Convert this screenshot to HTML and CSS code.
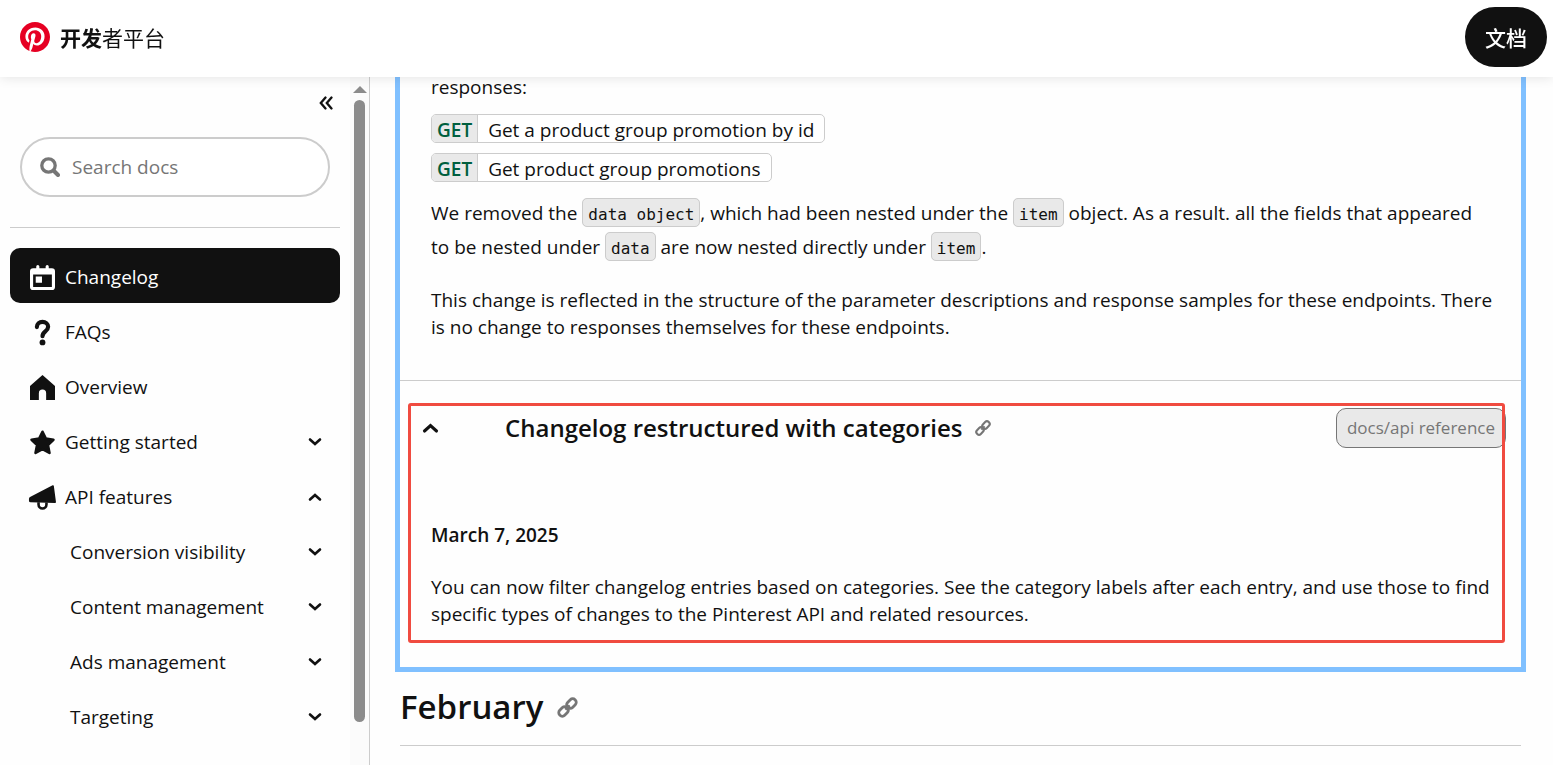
FILE: index.html
```html
<!DOCTYPE html>
<html lang="en">
<head>
<meta charset="utf-8">
<title>开发者平台</title>
<link rel="stylesheet" href="styles.css">
</head>
<body>
<svg class="sprite" aria-hidden="true">
  <symbol id="chevron" viewBox="0 0 14 10"><path d="M2 2.5 7 7 12 2.5" fill="none" stroke="currentColor" stroke-width="2.6" stroke-linecap="round" stroke-linejoin="miter"/></symbol>
  <symbol id="link" viewBox="0 0 24 24"><g fill="none" stroke="currentColor" stroke-width="3.2"><rect x="10.500" y="3.500" width="12" height="8" rx="3.800" transform="rotate(-45 16.500 7.500)"/><rect x="1.500" y="12.500" width="12" height="8" rx="3.800" transform="rotate(-45 7.500 16.500)"/><path d="m9.500 14.500 5-5" stroke-width="3"/></g></symbol>
</svg>
<header class="topbar">
  <a class="brand" href="#">
    <svg class="brand-logo" viewBox="0 0 24 24" aria-hidden="true"><circle cx="12" cy="12" r="11.500" fill="#fff"/><path fill="#e60023" d="M12 0C5.373 0 0 5.372 0 12c0 5.084 3.163 9.426 7.627 11.174-.105-.949-.2-2.405.042-3.441.218-.937 1.407-5.965 1.407-5.965s-.359-.719-.359-1.782c0-1.668.967-2.914 2.171-2.914 1.023 0 1.518.769 1.518 1.690 0 1.029-.655 2.568-.994 3.995-.283 1.194.599 2.169 1.777 2.169 2.133 0 3.772-2.249 3.772-5.495 0-2.873-2.064-4.882-5.012-4.882-3.414 0-5.418 2.561-5.418 5.207 0 1.031.397 2.138.893 2.738a.36.36 0 0 1 .083.345l-.333 1.360c-.053.220-.174.267-.402.161-1.499-.698-2.436-2.889-2.436-4.649 0-3.785 2.750-7.262 7.929-7.262 4.163 0 7.398 2.967 7.398 6.931 0 4.136-2.607 7.464-6.227 7.464-1.216 0-2.359-.631-2.750-1.378l-.748 2.853c-.271 1.043-1.002 2.350-1.492 3.146C9.570 23.812 10.763 24 12 24c6.627 0 12-5.373 12-12S18.627 0 12 0z"/></svg>
    <span class="brand-name"><strong>开发</strong>者平台</span>
  </a>
  <a class="docs-pill" href="#">文档</a>
</header>
<div class="layout">
  <aside class="sidebar">
    <div class="sidebar-body">
      <div class="collapse-row">
        <button class="collapse" type="button" aria-label="Collapse sidebar">
          <svg viewBox="0 0 14 14"><path d="M6.500 1.500 1.800 7l4.700 5.500M12.500 1.500 7.800 7l4.700 5.500" fill="none" stroke="currentColor" stroke-width="2.300" stroke-linecap="round"/></svg>
        </button>
      </div>
      <label class="search">
        <svg viewBox="0 0 20 20" aria-hidden="true"><circle cx="8.500" cy="8.500" r="6.700" fill="none" stroke="currentColor" stroke-width="3.300"/><path d="m14 14 4 4" stroke="currentColor" stroke-width="4" stroke-linecap="round"/></svg>
        <input type="text" placeholder="Search docs" aria-label="Search docs">
      </label>
      <nav class="nav">
        <a class="nav-item active" href="#">
          <svg class="nav-icon" viewBox="0 0 24 24"><path fill="currentColor" fill-rule="evenodd" d="M7.500 0A1.500 1.500 0 0 1 9 1.500V3h6V1.500a1.500 1.500 0 0 1 3 0V3h3a3 3 0 0 1 3 3v15a3 3 0 0 1-3 3H3a3 3 0 0 1-3-3V6a3 3 0 0 1 3-3h3V1.500A1.500 1.500 0 0 1 7.500 0zM3 9v12h18V9zM5.500 11h6v6h-6z"/></svg>
          <span>Changelog</span></a>
        <a class="nav-item" href="#">
          <svg class="nav-icon" viewBox="0 0 24 24"><path d="M6.600 6.800C6.600 3.800 9 1.800 12 1.800s5.400 2 5.400 4.700c0 4.500-5.400 4.300-5.400 9" fill="none" stroke="currentColor" stroke-width="4" stroke-linecap="round"/><circle cx="12" cy="21.500" r="2.800" fill="currentColor"/></svg>
          <span>FAQs</span></a>
        <a class="nav-item" href="#">
          <svg class="nav-icon" viewBox="0 0 24 24"><path fill="currentColor" d="M12 0 24 10.500V24h-8.500v-6.500a3.500 3.500 0 0 0-7 0V24H0V10.500z"/></svg>
          <span>Overview</span></a>
        <a class="nav-item" href="#">
          <svg class="nav-icon" viewBox="0 0 24 24"><path fill="currentColor" stroke="currentColor" stroke-width="2.500" stroke-linejoin="round" d="m12 1.700 3.200 6.600 7.300 1-5.300 5.100 1.500 7.600-6.700-3.700L5.300 22l1.500-7.600L1.500 9.300l7.300-1z"/></svg>
          <span>Getting started</span>
          <svg class="chev"><use href="#chevron"/></svg></a>
        <a class="nav-item" href="#">
          <svg class="nav-icon" viewBox="0 0 24 24"><path fill="currentColor" d="M21.700.3q1-.4 1.200.6l2 15.200q.2 1.300-1 1.200L.5 16.500Q-1 16.500-1 15v-1.800q0-1.500 1.500-2z"/><path d="M8.200 16.500v2.300a3.800 3.800 0 0 0 7.600 0v-2.100" fill="none" stroke="currentColor" stroke-width="2.500"/></svg>
          <span>API features</span>
          <svg class="chev up"><use href="#chevron"/></svg></a>
        <a class="nav-item sub" href="#"><span>Conversion visibility</span><svg class="chev"><use href="#chevron"/></svg></a>
        <a class="nav-item sub" href="#"><span>Content management</span><svg class="chev"><use href="#chevron"/></svg></a>
        <a class="nav-item sub" href="#"><span>Ads management</span><svg class="chev"><use href="#chevron"/></svg></a>
        <a class="nav-item sub" href="#"><span>Targeting</span><svg class="chev"><use href="#chevron"/></svg></a>
        <a class="nav-item sub" href="#"><span>Shopping</span><svg class="chev"><use href="#chevron"/></svg></a>
      </nav>
    </div>
    <div class="scrollbar" aria-hidden="true">
      <span class="scroll-arrow"></span>
      <span class="scroll-thumb"></span>
    </div>
  </aside>
  <main class="content">
    <section class="month">
      <article class="entry">
        <p>responses:</p>
        <div class="endpoints">
          <a class="endpoint" href="#"><b>GET</b><span>Get a product group promotion by id</span></a>
          <a class="endpoint" href="#"><b>GET</b><span>Get product group promotions</span></a>
        </div>
        <p class="with-code">We removed the <code>data object</code>, which had been nested under the <code>item</code> object. As a result. all the fields that appeared to be nested under <code>data</code> are now nested directly under <code>item</code>.</p>
        <p class="after-code">This change is reflected in the structure of the parameter descriptions and response samples for these endpoints. There is no change to responses themselves for these endpoints.</p>
      </article>
      <article class="entry restructured">
        <div class="entry-head">
          <button class="toggle" type="button" aria-label="Collapse entry"><svg class="toggle-icon"><use href="#chevron"/></svg></button>
          <h3>Changelog restructured with categories</h3>
          <a class="anchor" href="#" aria-label="Link to entry"><svg><use href="#link"/></svg></a>
          <span class="tag">docs/api reference</span>
        </div>
        <h4>March 7, 2025</h4>
        <p>You can now filter changelog entries based on categories. See the category labels after each entry, and use those to find specific types of changes to the Pinterest API and related resources.</p>
        <div class="highlight"></div>
      </article>
    </section>
    <div class="month-head">
      <h2>February</h2>
      <a class="anchor large" href="#" aria-label="Link to February"><svg><use href="#link"/></svg></a>
    </div>
  </main>
</div>
</body>
</html>
```
FILE: styles.css
```css
* { box-sizing: border-box; }

body {
  margin: 0;
  height: 100vh;
  overflow: hidden;
  color: #111;
  background: #fefefe;
  font-family: "Open Sans", "Noto Sans CJK SC", sans-serif;
  font-size: 19px;
  line-height: 27px;
}

a { color: inherit; text-decoration: none; }
p, h2, h3, h4 { margin: 0; }
button { border: 0; padding: 0; background: none; color: inherit; }
svg { display: block; }
.sprite { display: none; }

.topbar {
  position: fixed;
  inset: 0 0 auto;
  z-index: 2;
  display: flex;
  align-items: center;
  justify-content: space-between;
  height: 77px;
  padding: 0 6px 3px 20px;
  background: #fff;
  box-shadow: 0 0 12px rgba(0, 0, 0, 0.12);
}
.brand { display: flex; align-items: center; gap: 10px; }
.brand-logo { width: 30px; height: 30px; }
.brand-name { font-family: "Noto Sans CJK SC", sans-serif; font-size: 21px; }
.docs-pill {
  padding: 0 20px;
  border-radius: 30px;
  color: #fff;
  background: #111;
  font-family: "Noto Sans CJK SC", sans-serif;
  font-size: 21px;
  font-weight: 500;
  line-height: 60px;
}

.layout { display: flex; height: 100%; padding-top: 74px; }

.sidebar {
  display: flex;
  flex: 0 0 370px;
  border-right: 1px solid #ccc;
  overflow: hidden;
}
.sidebar-body { flex: 1; min-width: 0; padding: 0 10px; }
.collapse-row { display: flex; justify-content: flex-end; padding: 22px 7px 27px; }
.collapse svg { width: 14px; height: 14px; }
.search {
  display: flex;
  align-items: center;
  gap: 12px;
  height: 60px;
  margin: 0 10px 30px;
  padding: 0 18px;
  border: 2px solid #ccc;
  border-radius: 30px;
  background: #fff;
}
.search svg { flex: none; width: 20px; height: 20px; color: #767676; }
.search input {
  flex: 1;
  min-width: 0;
  padding: 0;
  border: 0;
  outline: 0;
  background: none;
  font: inherit;
  color: #111;
}
.search input::placeholder { color: #767676; }
.nav { padding-top: 20px; border-top: 1px solid #ccc; }
.nav-item {
  display: flex;
  align-items: center;
  gap: 10px;
  height: 55px;
  padding: 3px 18px 0 20px;
  border-radius: 10px;
}
.nav-item.active { color: #fff; background: #111; }
.nav-item.sub { padding-left: 60px; }
.nav-icon { width: 25px; height: 25px; padding: 0; overflow: visible; }
.chev { width: 14px; height: 10px; margin-left: auto; }
.chev.up, .toggle-icon { transform: scaleY(-1); }

.scrollbar {
  display: flex;
  flex-direction: column;
  align-items: center;
  gap: 7px;
  flex: 0 0 19px;
  padding: 12px 0 43px;
  background: #fbfbfb;
}
.scroll-arrow {
  border: 7px solid transparent;
  border-top: 0;
  border-bottom-color: #8b8b8b;
}
.scroll-thumb { flex: 1; width: 11px; border-radius: 6px; background: #8b8b8b; }

.content { flex: 1; min-width: 0; padding: 0 27px 0 25px; overflow: hidden; }
.month { border: 5px solid #80c0ff; border-top: 0; }
.entry { padding: 0 28px 39px 31px; }
.endpoints {
  display: flex;
  flex-direction: column;
  align-items: flex-start;
  gap: 10px;
  padding: 13px 0 14px;
}
.endpoint {
  display: flex;
  border: 1px solid #ccc;
  border-radius: 5px;
  overflow: hidden;
  background: #fff;
}
.endpoint b {
  padding: 3px 5px 0;
  border-right: 1px solid #ccc;
  color: #005f3e;
  background: #e9e9e9;
  font-weight: 600;
  line-height: 24px;
}
.endpoint span { padding: 3px 10px 0; line-height: 24px; }
.with-code { line-height: 34px; }
.after-code { margin-top: 23px; }
code {
  padding: 6px 5px 2px;
  border: 1px solid #ccc;
  border-radius: 5px;
  background: #e9e9e9;
  font-family: "DejaVu Sans Mono", monospace;
  font-size: 16px;
  line-height: 20px;
}

.restructured { position: relative; border-top: 1px solid #ccc; padding-top: 27px; }
.entry-head { display: flex; align-items: center; height: 40px; margin-right: -13px; }
.toggle { width: 74px; padding-left: 0; }
.toggle-icon { width: 17px; height: 12px; margin-left: -9px; }
h3 { font-size: 24px; font-weight: 600; line-height: 36px; }
h4 { margin: 74px 0 25px; font-size: 19px; font-weight: 600; }
.anchor { margin-left: 12px; color: #767676; }
.anchor svg { width: 16px; height: 16px; }
.anchor.large { margin-left: 14px; }
.anchor.large svg { width: 21px; height: 21px; }
.tag {
  margin-left: auto;
  padding: 0 10px;
  border: 1px solid #767676;
  border-radius: 10px;
  color: #767676;
  background: #e9e9e9;
  font-size: 17px;
  line-height: 38px;
}
.highlight {
  position: absolute;
  inset: 22px 16px 24px 8px;
  border: 3px solid #f04b40;
  border-radius: 3px;
  pointer-events: none;
}

.month-head {
  display: flex;
  align-items: center;
  height: 74px;
  margin: 0 5px;
  padding-bottom: 3px;
  border-bottom: 1px solid #ccc;
}
h2 { font-size: 33px; font-weight: 600; line-height: 48px; }
```
